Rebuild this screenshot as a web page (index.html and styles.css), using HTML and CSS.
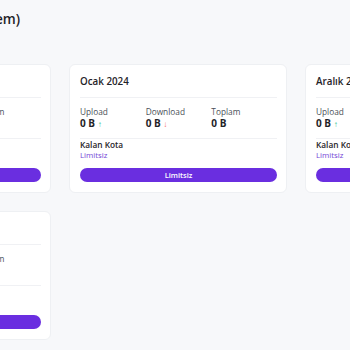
FILE: index.html
```html
<!DOCTYPE html>
<html lang="tr">
<head>
<meta charset="utf-8">
<title>Kota</title>
<link rel="stylesheet" href="styles.css">
</head>
<body>
<div class="page">
  <h1 class="page-title">Aylık Kota Kullanımı (Sistem)</h1>
  <div class="grid">
    <div class="card">
      <div class="card-title">Şubat 2024</div>
      <div class="divider"></div>
      <div class="stats">
        <div class="stat"><div class="label">Upload</div><div class="value">0 B <span class="up">&#8593;</span></div></div>
        <div class="stat"><div class="label">Download</div><div class="value">0 B <span class="down">&#8595;</span></div></div>
        <div class="stat"><div class="label">Toplam</div><div class="value">0 B</div></div>
      </div>
      <div class="divider"></div>
      <div class="quota-label">Kalan Kota</div>
      <div class="quota-value">Limitsiz</div>
      <div class="btn">Limitsiz</div>
    </div>
    <div class="card">
      <div class="card-title">Ocak 2024</div>
      <div class="divider"></div>
      <div class="stats">
        <div class="stat"><div class="label">Upload</div><div class="value">0 B <span class="up">&#8593;</span></div></div>
        <div class="stat"><div class="label">Download</div><div class="value">0 B <span class="down">&#8595;</span></div></div>
        <div class="stat"><div class="label">Toplam</div><div class="value">0 B</div></div>
      </div>
      <div class="divider"></div>
      <div class="quota-label">Kalan Kota</div>
      <div class="quota-value">Limitsiz</div>
      <div class="btn">Limitsiz</div>
    </div>
    <div class="card">
      <div class="card-title">Aralık 2023</div>
      <div class="divider"></div>
      <div class="stats">
        <div class="stat"><div class="label">Upload</div><div class="value">0 B <span class="up">&#8593;</span></div></div>
        <div class="stat"><div class="label">Download</div><div class="value">0 B <span class="down">&#8595;</span></div></div>
        <div class="stat"><div class="label">Toplam</div><div class="value">0 B</div></div>
      </div>
      <div class="divider"></div>
      <div class="quota-label">Kalan Kota</div>
      <div class="quota-value">Limitsiz</div>
      <div class="btn">Limitsiz</div>
    </div>
    <div class="card">
      <div class="card-title">Kasım 2023</div>
      <div class="divider"></div>
      <div class="stats">
        <div class="stat"><div class="label">Upload</div><div class="value">0 B <span class="up">&#8593;</span></div></div>
        <div class="stat"><div class="label">Download</div><div class="value">0 B <span class="down">&#8595;</span></div></div>
        <div class="stat"><div class="label">Toplam</div><div class="value">0 B</div></div>
      </div>
      <div class="divider"></div>
      <div class="quota-label">Kalan Kota</div>
      <div class="quota-value">Limitsiz</div>
      <div class="btn">Limitsiz</div>
    </div>
  </div>
</div>
</body>
</html>
```
FILE: styles.css
```css
html, body {
  margin: 0;
  padding: 0;
  overflow: hidden;
  background: #f7f8fa;
  font-family: "Open Sans", "Liberation Sans", sans-serif;
  color: #1f2328;
}
.page {
  width: 700px;
  margin-left: -167px;
  padding-top: 9px;
}
.page-title {
  margin: 0 0 35px 0;
  font-size: 13.6px;
  line-height: 20px;
  font-weight: 600;
  color: #1f2328;
}
.grid {
  display: grid;
  grid-template-columns: repeat(3, 218px);
  gap: 18px;
}
.card {
  background: #ffffff;
  border: 1px solid #eef0f3;
  border-radius: 6px;
  padding: 9px 9px 10px 10px;
  display: flex;
  flex-direction: column;
}
.card-title {
  font-size: 9.8px;
  line-height: 16px;
  font-weight: 600;
  color: #1f2328;
}
.divider {
  height: 1px;
  background: #f0f1f4;
  margin-top: 7px;
}
.stats {
  display: grid;
  grid-template-columns: repeat(3, 1fr);
  margin-top: 8px;
  margin-bottom: 8px;
}
.label {
  font-size: 8.3px;
  line-height: 11px;
  color: #4a5058;
}
.value {
  font-size: 10px;
  line-height: 12px;
  font-weight: 700;
  color: #1f2328;
}
.up {
  color: #34c38f;
  font-size: 8px;
  font-weight: 400;
}
.down {
  color: #f46a6a;
  font-size: 8px;
  font-weight: 400;
}
.stats + .divider {
  margin-top: 0;
}
.quota-label {
  font-size: 8.3px;
  line-height: 11px;
  font-weight: 600;
  color: #1f2328;
}
.quota-value {
  font-size: 7.8px;
  line-height: 11px;
  color: #7445d6;
}
.btn {
  margin-top: 7px;
  height: 14px;
  line-height: 14px;
  border-radius: 7px;
  background: #6a2ee0;
  color: #ffffff;
  font-size: 7.5px;
  font-weight: 600;
  text-align: center;
}
```
